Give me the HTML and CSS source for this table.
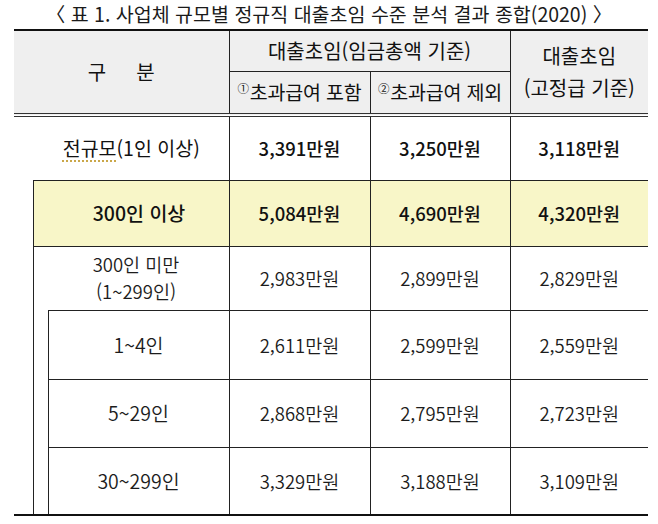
FILE: index.html
```html
<!DOCTYPE html>
<html lang="ko">
<head>
<meta charset="utf-8">
<title>사업체 규모별 정규직 대출초임 수준 분석 결과 종합(2020)</title>
<link rel="stylesheet" href="styles.css">
</head>
<body>
<div class="page">
  <h1 class="title">〈 표 1. 사업체 규모별 정규직 대출초임 수준 분석 결과 종합(2020) 〉</h1>
  <table class="wage-table">
    <colgroup>
      <col class="c-a"><col class="c-b"><col class="c-c"><col class="c-d"><col class="c-e"><col class="c-f">
    </colgroup>
    <thead>
      <tr class="head-top">
        <th colspan="3" rowspan="2" class="h-group">구<span class="gap"></span>분</th>
        <th colspan="2">대출초임(임금총액 기준)</th>
        <th rowspan="2" class="h-last">대출초임<br>(고정급 기준)</th>
      </tr>
      <tr class="head-sub">
        <th><span class="circ">①</span>초과급여 포함</th>
        <th><span class="circ">②</span>초과급여 제외</th>
      </tr>
    </thead>
    <tbody>
      <tr class="r-all strong">
        <td colspan="3" class="label l-all"><span class="spell">전규모</span>(1인 이상)</td>
        <td>3,391만원</td><td>3,250만원</td><td class="last">3,118만원</td>
      </tr>
      <tr class="r-hl strong">
        <td rowspan="5" class="gutter"></td>
        <td colspan="2" class="label l-hl">300인 이상</td>
        <td>5,084만원</td><td>4,690만원</td><td class="last">4,320만원</td>
      </tr>
      <tr class="r-sub light">
        <td colspan="2" class="label l-sub"><span class="line">300인 미만</span><span class="line">(1~299인)</span></td>
        <td>2,983만원</td><td>2,899만원</td><td class="last">2,829만원</td>
      </tr>
      <tr class="r-s1 light">
        <td rowspan="3" class="gutter2"></td>
        <td class="label l-in">1~4인</td>
        <td>2,611만원</td><td>2,599만원</td><td class="last">2,559만원</td>
      </tr>
      <tr class="r-s2 light">
        <td class="label l-in">5~29인</td>
        <td>2,868만원</td><td>2,795만원</td><td class="last">2,723만원</td>
      </tr>
      <tr class="r-s3 light">
        <td class="label l-in">30~299인</td>
        <td>3,329만원</td><td>3,188만원</td><td class="last">3,109만원</td>
      </tr>
    </tbody>
  </table>
</div>
</body>
</html>
```
FILE: styles.css
```css
html, body {
  margin: 0;
  padding: 0;
  background: #ffffff;
}

body {
  font-family: "Noto Sans CJK KR", "Noto Sans", sans-serif;
  color: #111111;
}

.page {
  width: 658px;
  padding-left: 14px;
  box-sizing: border-box;
}

.title {
  margin: 0 0 0 -14px;
  width: 658px;
  height: 29px;
  line-height: 28px;
  font-size: 19.5px;
  font-weight: 400;
  text-align: center;
  color: #1a1a1a;
}

.wage-table {
  border-collapse: collapse;
  table-layout: fixed;
  width: 634px;
  border-top: 2px solid #111111;
  border-bottom: 2px solid #111111;
  border-left: hidden;
  border-right: hidden;
}

.c-a { width: 19px; }
.c-b { width: 15px; }
.c-c { width: 181px; }
.c-d { width: 141px; }
.c-e { width: 140px; }
.c-f { width: 138px; }

th, td {
  border: 1px solid #222222;
  padding: 0;
  text-align: center;
  vertical-align: middle;
  font-size: 18.5px;
  line-height: 28px;
}

th {
  background: #efefef;
  font-weight: 400;
  color: #111111;
  font-size: 20px;
  white-space: nowrap;
}

thead tr.head-sub th {
  border-bottom: 4px double #333333;
  font-size: 19.5px;
  letter-spacing: -0.2px;
}

.h-group {
  border-bottom: 4px double #333333;
}

.h-last {
  border-bottom: 4px double #333333;
  line-height: 32px;
}

.head-top { height: 41px; }
.head-sub { height: 44px; }

.gap {
  display: inline-block;
  width: 30px;
}

.circ {
  font-size: 11.5px;
  vertical-align: 7px;
  line-height: 1;
  margin-right: 1px;
}

/* rows */
.r-all { height: 65px; }
.r-hl { height: 66px; }
.r-sub { height: 64px; }
.r-s1 { height: 69px; }
.r-s2 { height: 68px; }
.r-s3 { height: 68px; }

.strong td { font-weight: 500; color: #111111; }
.light td { font-weight: 350; color: #1c1c1c; }

.label { font-size: 19.5px; }
.l-all { padding-left: 20px; border-bottom: none; font-weight: 400 !important; }
.l-hl { padding-left: 16px; }
.l-sub { border-bottom: none; padding-left: 10px; font-size: 18.5px; }
.l-in { padding-left: 0; }

.line {
  display: block;
  line-height: 27px;
}

.r-hl td:not(.gutter) {
  background: #f8f6c8;
  border-top: 1px solid #222222;
}

.gutter {
  border-top: none;
  border-left: none;
  border-bottom: 2px solid #111111;
}

.gutter2 {
  border-top: none;
  border-bottom: 2px solid #111111;
}

.spell {
  text-decoration: underline dotted #c9a646;
  text-underline-offset: 4px;
}
```
